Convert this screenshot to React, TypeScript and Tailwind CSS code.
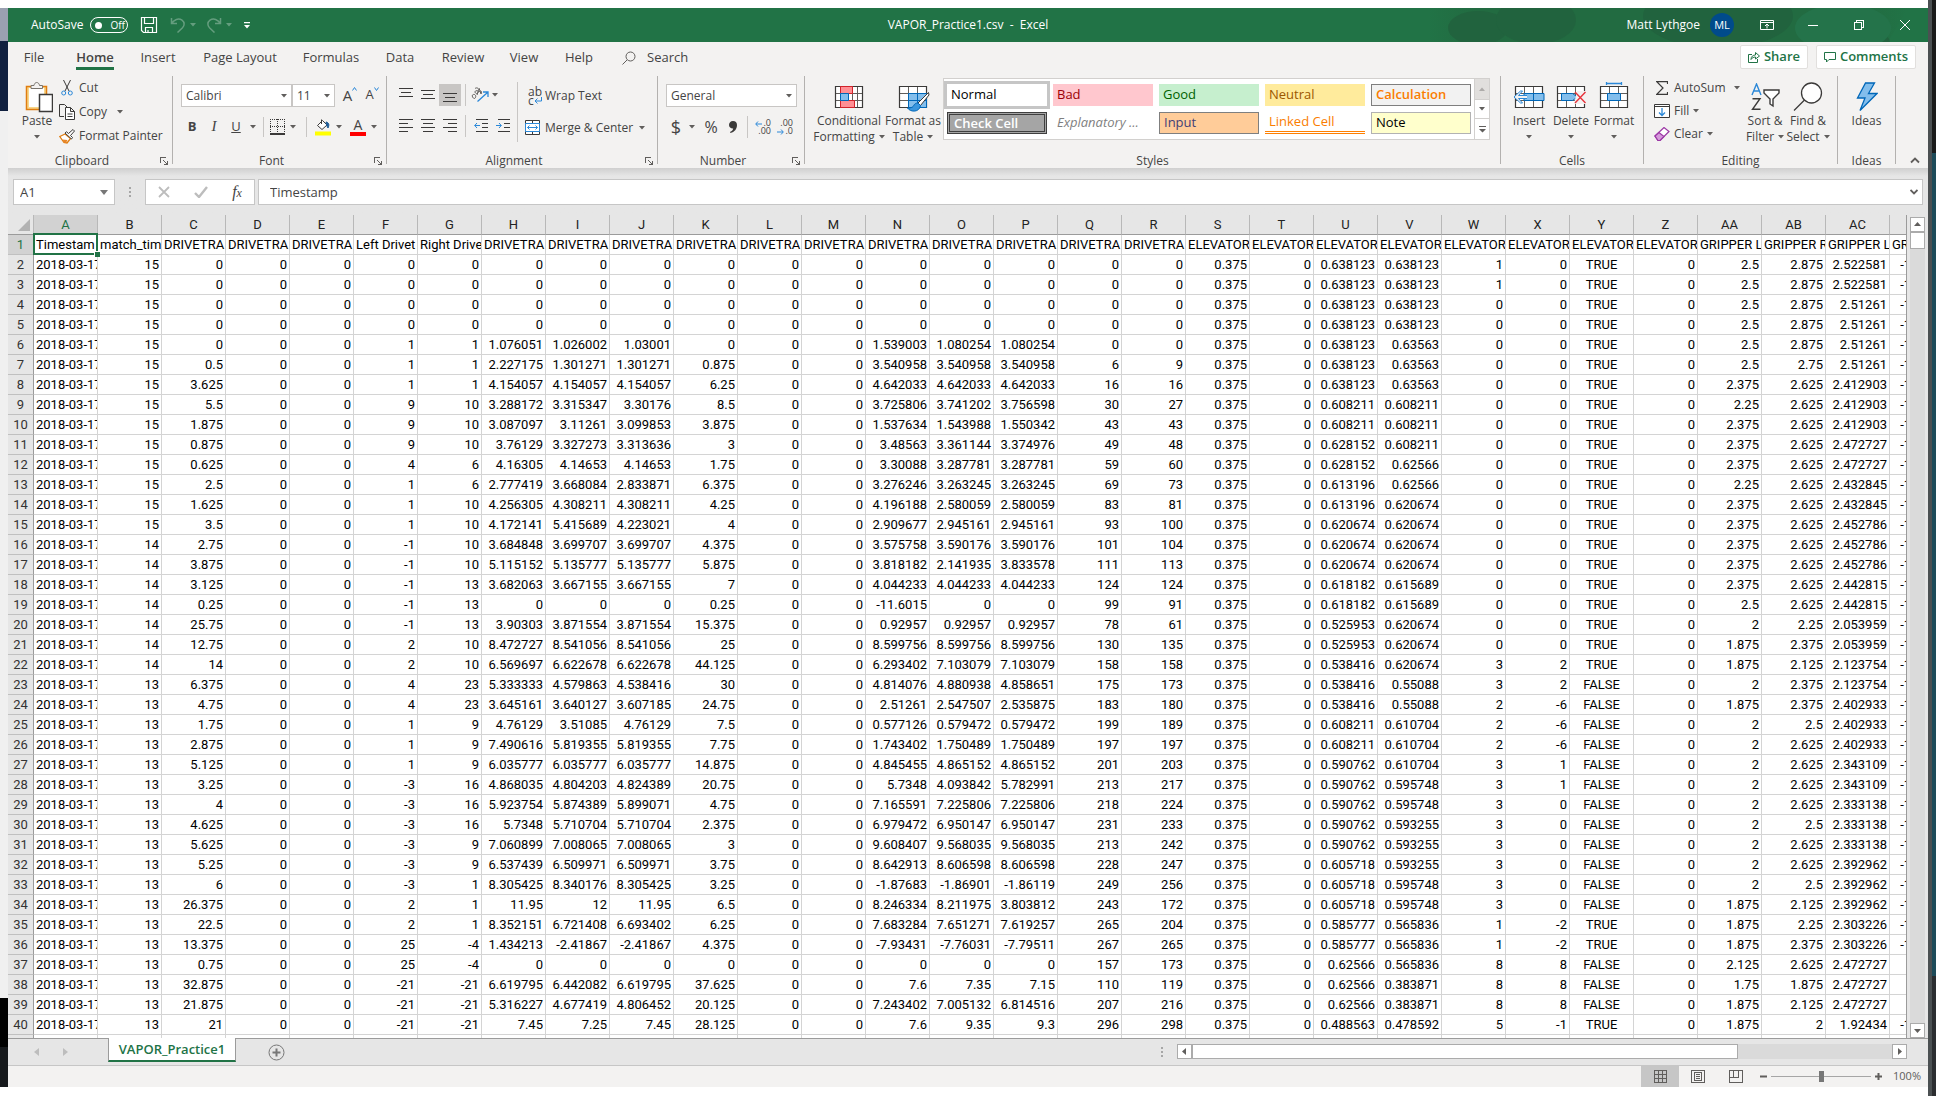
import type { ReactNode } from 'react';

const COLUMNS = 'A B C D E F G H I J K L M N O P Q R S T U V W X Y Z AA AB AC AD'.split(' ');

const HEADERS = [
  'Timestam', 'match_tim', 'DRIVETRA', 'DRIVETRA', 'DRIVETRA', 'Left Drivet', 'Right Drive',
  'DRIVETRA', 'DRIVETRA', 'DRIVETRA', 'DRIVETRA', 'DRIVETRA', 'DRIVETRA', 'DRIVETRA', 'DRIVETRA',
  'DRIVETRA', 'DRIVETRA', 'DRIVETRA', 'ELEVATOR', 'ELEVATOR', 'ELEVATOR', 'ELEVATOR', 'ELEVATOR',
  'ELEVATOR', 'ELEVATOR', 'ELEVATOR', 'GRIPPER L', 'GRIPPER R', 'GRIPPER L', 'GRIPPER R',
];

const CSV = `15,0,0,0,0,0,0,0,0,0,0,0,0,0,0,0,0,0.375,0,0.638123,0.638123,1,0,TRUE,0,2.5,2.875,2.522581,-1.52258
15,0,0,0,0,0,0,0,0,0,0,0,0,0,0,0,0,0.375,0,0.638123,0.638123,1,0,TRUE,0,2.5,2.875,2.522581,-1.52258
15,0,0,0,0,0,0,0,0,0,0,0,0,0,0,0,0,0.375,0,0.638123,0.638123,0,0,TRUE,0,2.5,2.875,2.51261,-1.52258
15,0,0,0,0,0,0,0,0,0,0,0,0,0,0,0,0,0.375,0,0.638123,0.638123,0,0,TRUE,0,2.5,2.875,2.51261,-1.52258
15,0,0,0,1,1,1.076051,1.026002,1.03001,0,0,0,1.539003,1.080254,1.080254,0,0,0.375,0,0.638123,0.63563,0,0,TRUE,0,2.5,2.875,2.51261,-1.52258
15,0.5,0,0,1,1,2.227175,1.301271,1.301271,0.875,0,0,3.540958,3.540958,3.540958,6,9,0.375,0,0.638123,0.63563,0,0,TRUE,0,2.5,2.75,2.51261,-1.52258
15,3.625,0,0,1,1,4.154057,4.154057,4.154057,6.25,0,0,4.642033,4.642033,4.642033,16,16,0.375,0,0.638123,0.63563,0,0,TRUE,0,2.375,2.625,2.412903,-1.52258
15,5.5,0,0,9,10,3.288172,3.315347,3.30176,8.5,0,0,3.725806,3.741202,3.756598,30,27,0.375,0,0.608211,0.608211,0,0,TRUE,0,2.25,2.625,2.412903,-1.52258
15,1.875,0,0,9,10,3.087097,3.11261,3.099853,3.875,0,0,1.537634,1.543988,1.550342,43,43,0.375,0,0.608211,0.608211,0,0,TRUE,0,2.375,2.625,2.412903,-1.52258
15,0.875,0,0,9,10,3.76129,3.327273,3.313636,3,0,0,3.48563,3.361144,3.374976,49,48,0.375,0,0.628152,0.608211,0,0,TRUE,0,2.375,2.625,2.472727,-1.52258
15,0.625,0,0,4,6,4.16305,4.14653,4.14653,1.75,0,0,3.30088,3.287781,3.287781,59,60,0.375,0,0.628152,0.62566,0,0,TRUE,0,2.375,2.625,2.472727,-1.52258
15,2.5,0,0,1,6,2.777419,3.668084,2.833871,6.375,0,0,3.276246,3.263245,3.263245,69,73,0.375,0,0.613196,0.62566,0,0,TRUE,0,2.25,2.625,2.432845,-1.52258
15,1.625,0,0,1,10,4.256305,4.308211,4.308211,4.25,0,0,4.196188,2.580059,2.580059,83,81,0.375,0,0.613196,0.620674,0,0,TRUE,0,2.375,2.625,2.432845,-1.52258
15,3.5,0,0,1,10,4.172141,5.415689,4.223021,4,0,0,2.909677,2.945161,2.945161,93,100,0.375,0,0.620674,0.620674,0,0,TRUE,0,2.375,2.625,2.452786,-1.52258
14,2.75,0,0,-1,10,3.684848,3.699707,3.699707,4.375,0,0,3.575758,3.590176,3.590176,101,104,0.375,0,0.620674,0.620674,0,0,TRUE,0,2.375,2.625,2.452786,-1.52258
14,3.875,0,0,-1,10,5.115152,5.135777,5.135777,5.875,0,0,3.818182,2.141935,3.833578,111,113,0.375,0,0.620674,0.620674,0,0,TRUE,0,2.375,2.625,2.452786,-1.52258
14,3.125,0,0,-1,13,3.682063,3.667155,3.667155,7,0,0,4.044233,4.044233,4.044233,124,124,0.375,0,0.618182,0.615689,0,0,TRUE,0,2.375,2.625,2.442815,-1.52258
14,0.25,0,0,-1,13,0,0,0,0.25,0,0,-11.6015,0,0,99,91,0.375,0,0.618182,0.615689,0,0,TRUE,0,2.5,2.625,2.442815,-1.52258
14,25.75,0,0,-1,13,3.90303,3.871554,3.871554,15.375,0,0,0.92957,0.92957,0.92957,78,61,0.375,0,0.525953,0.620674,0,0,TRUE,0,2,2.25,2.053959,-1.52258
14,12.75,0,0,2,10,8.472727,8.541056,8.541056,25,0,0,8.599756,8.599756,8.599756,130,135,0.375,0,0.525953,0.620674,0,0,TRUE,0,1.875,2.375,2.053959,-1.52258
14,14,0,0,2,10,6.569697,6.622678,6.622678,44.125,0,0,6.293402,7.103079,7.103079,158,158,0.375,0,0.538416,0.620674,3,2,TRUE,0,1.875,2.125,2.123754,-1.52258
13,6.375,0,0,4,23,5.333333,4.579863,4.538416,30,0,0,4.814076,4.880938,4.858651,175,173,0.375,0,0.538416,0.55088,3,2,FALSE,0,2,2.375,2.123754,-1.52258
13,4.75,0,0,4,23,3.645161,3.640127,3.607185,24.75,0,0,2.51261,2.547507,2.535875,183,180,0.375,0,0.538416,0.55088,2,-6,FALSE,0,1.875,2.375,2.402933,-1.52258
13,1.75,0,0,1,9,4.76129,3.51085,4.76129,7.5,0,0,0.577126,0.579472,0.579472,199,189,0.375,0,0.608211,0.610704,2,-6,FALSE,0,2,2.5,2.402933,-1.52258
13,2.875,0,0,1,9,7.490616,5.819355,5.819355,7.75,0,0,1.743402,1.750489,1.750489,197,197,0.375,0,0.608211,0.610704,2,-6,FALSE,0,2,2.625,2.402933,-1.52258
13,5.125,0,0,1,9,6.035777,6.035777,6.035777,14.875,0,0,4.845455,4.865152,4.865152,201,203,0.375,0,0.590762,0.610704,3,1,FALSE,0,2,2.625,2.343109,-1.52258
13,3.25,0,0,-3,16,4.868035,4.804203,4.824389,20.75,0,0,5.7348,4.093842,5.782991,213,217,0.375,0,0.590762,0.595748,3,1,FALSE,0,2,2.625,2.343109,-1.52258
13,4,0,0,-3,16,5.923754,5.874389,5.899071,4.75,0,0,7.165591,7.225806,7.225806,218,224,0.375,0,0.590762,0.595748,3,0,FALSE,0,2,2.625,2.333138,-1.52258
13,4.625,0,0,-3,16,5.7348,5.710704,5.710704,2.375,0,0,6.979472,6.950147,6.950147,231,233,0.375,0,0.590762,0.593255,3,0,FALSE,0,2,2.5,2.333138,-1.52258
13,5.625,0,0,-3,9,7.060899,7.008065,7.008065,3,0,0,9.608407,9.568035,9.568035,213,242,0.375,0,0.590762,0.593255,3,0,FALSE,0,2,2.625,2.333138,-1.52258
13,5.25,0,0,-3,9,6.537439,6.509971,6.509971,3.75,0,0,8.642913,8.606598,8.606598,228,247,0.375,0,0.605718,0.593255,3,0,FALSE,0,2,2.625,2.392962,-1.52258
13,6,0,0,-3,1,8.305425,8.340176,8.305425,3.25,0,0,-1.87683,-1.86901,-1.86119,249,256,0.375,0,0.605718,0.595748,3,0,FALSE,0,2,2.5,2.392962,-1.52258
13,26.375,0,0,2,1,11.95,12,11.95,6.5,0,0,8.246334,8.211975,3.803812,243,172,0.375,0,0.605718,0.595748,3,0,FALSE,0,1.875,2.125,2.392962,-1.52258
13,22.5,0,0,2,1,8.352151,6.721408,6.693402,6.25,0,0,7.683284,7.651271,7.619257,265,204,0.375,0,0.585777,0.565836,1,-2,TRUE,0,1.875,2.25,2.303226,-1.52258
13,13.375,0,0,25,-4,1.434213,-2.41867,-2.41867,4.375,0,0,-7.93431,-7.76031,-7.79511,267,265,0.375,0,0.585777,0.565836,1,-2,TRUE,0,1.875,2.375,2.303226,-1.52258
13,0.75,0,0,25,-4,0,0,0,0,0,0,0,0,0,157,173,0.375,0,0.62566,0.565836,8,8,FALSE,0,2.125,2.625,2.472727,0
13,32.875,0,0,-21,-21,6.619795,6.442082,6.619795,37.625,0,0,7.6,7.35,7.15,110,119,0.375,0,0.62566,0.383871,8,8,FALSE,0,1.75,1.875,2.472727,0
13,21.875,0,0,-21,-21,5.316227,4.677419,4.806452,20.125,0,0,7.243402,7.005132,6.814516,207,216,0.375,0,0.62566,0.383871,8,8,FALSE,0,1.875,2.125,2.472727,0
13,21,0,0,-21,-21,7.45,7.25,7.45,28.125,0,0,7.6,9.35,9.3,296,298,0.375,0,0.488563,0.478592,5,-1,TRUE,0,1.875,2,1.92434,-1.52258`;

const ROWS = CSV.split('\n').map((line) => ['2018-03-17', ...line.split(',')]);

function Caret({ className = '' }: { className?: string }) {
  return (
    <svg viewBox="0 0 6 4" width="6" height="4" className={`shrink-0 fill-[#605e5c] ${className}`}>
      <path d="M0 0h6L3 3.5z" />
    </svg>
  );
}

function Lines({ rows }: { rows: Array<[number, number, number]> }) {
  return (
    <svg viewBox="0 0 14 14" width="14" height="14" stroke="#3b3a39" shapeRendering="crispEdges">
      {rows.map(([y, x1, x2]) => (
        <path key={y} d={`M${x1} ${y}.5H${x2}`} />
      ))}
    </svg>
  );
}

function IconButton({ label, children, active, className = 'w-[22px]' }: { label: string; children: ReactNode; active?: boolean; className?: string }) {
  return (
    <button type="button" aria-label={label} className={`flex h-[22px] shrink-0 items-center justify-center ${active ? 'bg-[#c8c6c4]' : ''} ${className}`}>
      {children}
    </button>
  );
}

function DropButton({ label }: { label: string }) {
  return (
    <button type="button" aria-label={label} className="flex h-[22px] w-[11px] shrink-0 items-center justify-center">
      <Caret />
    </button>
  );
}

function Divider({ className = 'h-[22px]' }: { className?: string }) {
  return <span className={`w-px shrink-0 bg-[#c8c6c4] ${className}`} />;
}

function Group({ label, width, launcher, children }: { label: string; width: string; launcher?: boolean; children: ReactNode }) {
  return (
    <>
      <section aria-label={label} className={`flex h-[92px] flex-col ${width}`}>
        <div className="flex h-[77px] w-full">{children}</div>
        <div className="flex h-[15px] items-center">
          <span className="flex-1 text-center leading-[15px]">{label}</span>
          {launcher && (
            <button type="button" aria-label={`${label} settings`} className="flex h-4 w-4 items-center justify-center">
              <svg viewBox="0 0 8 8" width="8" height="8" fill="none" stroke="#605e5c" shapeRendering="crispEdges">
                <path d="M.5 6V.5H6M3 3l4 4M7.5 4v3.500H4" />
              </svg>
            </button>
          )}
        </div>
      </section>
      <span className="h-[88px] w-px shrink-0 bg-[#b3b1af]" />
    </>
  );
}

function BigButton({ icon, lines, caret, width }: { icon: ReactNode; lines: string[]; caret?: boolean; width: string }) {
  return (
    <button type="button" className={`flex shrink-0 flex-col items-center ${width}`}>
      <span className="flex h-[37px] items-center pt-1">{icon}</span>
      {lines.map((line, i) => (
        <span key={line} className="flex h-4 items-center gap-1 leading-4 whitespace-nowrap">
          {line}
          {caret && lines.length > 1 && i === lines.length - 1 && <Caret />}
        </span>
      ))}
      {caret && lines.length === 1 && <Caret className="mt-1.5" />}
    </button>
  );
}

function SmallButton({ icon, label, caret, height = 'h-6', gap = 'gap-1.5' }: { icon: ReactNode; label: string; caret?: boolean; height?: string; gap?: string }) {
  return (
    <button type="button" className={`flex items-center ${height} ${gap}`}>
      <span className="flex items-center gap-1">
        <span className="flex w-4 justify-center">{icon}</span>
        <span className="whitespace-nowrap">{label}</span>
      </span>
      {caret && <Caret />}
    </button>
  );
}

function Select({ label, value, width }: { label: string; value: string; width: string }) {
  return (
    <label className={`relative flex h-[23px] shrink-0 items-center border border-[#c8c6c4] bg-white ${width}`}>
      <select aria-label={label} defaultValue={value} className="h-full w-full appearance-none bg-transparent pl-1 outline-none">
        <option>{value}</option>
      </select>
      <Caret className="pointer-events-none absolute right-1" />
    </label>
  );
}

function TitleBar() {
  return (
    <header className="relative flex h-[34px] shrink-0 items-center overflow-hidden bg-[#217346] text-white">
      <svg viewBox="0 0 500 34" width="500" height="34" className="absolute top-0 right-0">
        <defs>
          <linearGradient id="band" x1="0" x2="1">
            <stop offset="0" stopColor="#217346" />
            <stop offset="0.1" stopColor="#226b41" />
            <stop offset="0.9" stopColor="#226b41" />
            <stop offset="1" stopColor="#217346" />
          </linearGradient>
        </defs>
        <path d="M0 0h480l-20 34H0z" fill="url(#band)" />
        <g fill="#21633e">
          <ellipse cx="50" cy="20" rx="30" ry="17" />
          <ellipse cx="108" cy="12" rx="40" ry="24" />
          <ellipse cx="290" cy="8" rx="75" ry="32" />
          <circle cx="450" cy="36" r="12" />
        </g>
        <ellipse cx="415" cy="20" rx="48" ry="24" fill="#24734a" />
      </svg>
      <div className="relative flex h-full flex-1 items-center text-xs">
        <label className="ml-[23px] flex items-center gap-[7px]">
          AutoSave
          <span className="relative flex h-4 w-[38px] items-center rounded-full border border-white">
            <input type="checkbox" className="peer absolute inset-0 appearance-none" />
            <span className="ml-1 h-[7px] w-[7px] rounded-full bg-white" />
            <span className="ml-2 text-[10px] leading-3">Off</span>
          </span>
        </label>
        <button type="button" aria-label="Save" className="ml-3">
          <svg viewBox="0 0 18 18" width="18" height="18" fill="none" stroke="white" strokeWidth="1.200">
            <path d="M1.500 1.500h15v15h-13l-2-2zM4.500 1.500v6h9v-6M5.500 16.500v-5h7v5M8 16.500v-2.500" />
          </svg>
        </button>
        <button type="button" aria-label="Undo" className="ml-3 flex items-center gap-1 opacity-30">
          <svg viewBox="0 0 16 16" width="16" height="16" fill="none" stroke="white" strokeWidth="1.500">
            <path d="M1.500 1v5.500H7M1.500 6.500C4 2.500 8.500.8 12 3.200c3 2.300 2.500 5.600.5 7.600L7.500 15.500" />
          </svg>
          <svg viewBox="0 0 6 4" width="6" height="4" fill="white"><path d="M0 0h6L3 3.500z" /></svg>
        </button>
        <button type="button" aria-label="Redo" className="ml-[10px] flex items-center gap-1 opacity-30">
          <svg viewBox="0 0 16 16" width="16" height="16" fill="none" stroke="white" strokeWidth="1.500">
            <path d="M14.500 1v5.500H9M14.500 6.500C12 2.500 7.500.8 4 3.200 1 5.500 1.500 8.800 3.500 10.800L8.500 15.500" />
          </svg>
          <svg viewBox="0 0 6 4" width="6" height="4" fill="white"><path d="M0 0h6L3 3.500z" /></svg>
        </button>
        <button type="button" aria-label="Customize Quick Access Toolbar" className="ml-3">
          <svg viewBox="0 0 6 7" width="6" height="7" fill="white"><path d="M0 0h6v1.200H0zM0 3h6L3 6.500z" /></svg>
        </button>
      </div>
      <h1 className="relative text-xs whitespace-pre">VAPOR_Practice1.csv  -  Excel</h1>
      <div className="relative flex h-full flex-1 items-center justify-end text-xs">
        <button type="button" className="mr-[10px] flex items-center gap-[10px]">
          Matt Lythgoe
          <span className="flex h-6 w-6 items-center justify-center rounded-full bg-[#004b8b] text-[11px]">ML</span>
        </button>
        <button type="button" aria-label="Ribbon Display Options" className="flex w-[46px] justify-center">
          <svg viewBox="0 0 14 12" width="14" height="12" fill="none" stroke="white">
            <path d="M.5 1.500h13v9H.5zM.5 3.500h13M7 9.500v-4M5 7l2-2 2 2" />
          </svg>
        </button>
        <button type="button" aria-label="Minimize" className="flex w-[46px] justify-center">
          <svg viewBox="0 0 10 10" width="10" height="10" stroke="white" shapeRendering="crispEdges"><path d="M0 5.500h10" /></svg>
        </button>
        <button type="button" aria-label="Restore" className="flex w-[46px] justify-center">
          <svg viewBox="0 0 10 10" width="10" height="10" fill="none" stroke="white" shapeRendering="crispEdges">
            <path d="M.5 2.500h7v7h-7zM2.500 2V.5h7v7H8" />
          </svg>
        </button>
        <button type="button" aria-label="Close" className="flex w-[46px] justify-center">
          <svg viewBox="0 0 10 10" width="10" height="10" stroke="white"><path d="M0 0l10 10M10 0L0 10" /></svg>
        </button>
      </div>
    </header>
  );
}

const TABS: Array<[string, string]> = [
  ['File', 'w-[52px]'],
  ['Home', 'w-[70px]'],
  ['Insert', 'w-[56px]'],
  ['Page Layout', 'w-[108px]'],
  ['Formulas', 'w-[74px]'],
  ['Data', 'w-[64px]'],
  ['Review', 'w-[62px]'],
  ['View', 'w-[60px]'],
  ['Help', 'w-[50px]'],
];

function TabRow() {
  return (
    <nav className="flex h-[34px] shrink-0 items-center bg-[#f3f2f1] text-[13px]">
      {TABS.map(([tab, width]) => (
        <button key={tab} type="button" className={`flex h-full justify-center pt-[5px] ${width}`}>
          <span className={tab === 'Home' ? 'h-[23px] border-b-[3px] border-[#217346] font-semibold leading-5' : 'leading-5'}>{tab}</span>
        </button>
      ))}
      <label className="ml-[18px] flex items-center gap-[11px] pb-0.5">
        <svg viewBox="0 0 14 14" width="14" height="14" fill="none" stroke="#605e5c">
          <circle cx="8.500" cy="5.500" r="4.500" /><path d="M5 9L.5 13.500" />
        </svg>
        <input aria-label="Search" placeholder="Search" className="w-24 bg-transparent outline-none placeholder:text-[#444]" />
      </label>
      <div className="ml-auto flex gap-2 pr-3 pb-1 font-semibold text-[#217346]">
        <button type="button" className="flex h-6 w-[68px] items-center justify-center gap-1 rounded-xs border border-[#e1dfdd] bg-white">
          <svg viewBox="0 0 12 12" width="12" height="12" fill="none" stroke="#217346">
            <path d="M4 3.500H.5v8h9V8M3 8.500C3 5.500 5 4 7.500 4V1.500L11.500 5 7.500 8V6C5.500 6 4 6.800 3 8.500z" />
          </svg>
          Share
        </button>
        <button type="button" className="flex h-6 w-[100px] items-center justify-center gap-1 rounded-xs border border-[#e1dfdd] bg-white">
          <svg viewBox="0 0 12 12" width="12" height="12" fill="none" stroke="#217346"><path d="M.5 1.500h11v7H5L2.500 11V8.500h-2z" /></svg>
          Comments
        </button>
      </div>
    </nav>
  );
}

function GridIcon({ children, clip = 'M.5 .5h27v21H.5zM9.500 .5v21M18.500 .5v21M.5 7.500h27M.5 14.500h27' }: { children: ReactNode; clip?: string }) {
  return (
    <svg viewBox="0 0 34 30" width="34" height="30" fill="none">
      <g transform="translate(3 4)">
        <path d="M.5 .5h27v21H.5z" fill="#fff" />
        <path d={clip} stroke="#605e5c" />
        <path d="M.5 .5h27v21H.5z" stroke="#3b3a39" strokeWidth="1.200" />
        {children}
      </g>
    </svg>
  );
}

function StyleCell({ children, className }: { children: ReactNode; className: string }) {
  return (
    <button type="button" className={`h-[22px] w-[100px] overflow-hidden px-1 pb-0.5 text-left font-['Open_Sans',sans-serif] text-[13px] leading-4 whitespace-nowrap ${className}`}>
      {children}
    </button>
  );
}

function Ribbon() {
  return (
    <div className="flex h-[92px] shrink-0 bg-[#f3f2f1] text-xs">
      <Group label="Clipboard" width="w-[164px]" launcher>
        <BigButton
          width="ml-[7px] w-11"
          lines={['Paste']}
          caret
          icon={
            <svg viewBox="0 0 28 32" width="28" height="32" fill="none" className="ml-1">
              <path d="M1.500 5.500h20v23h-20z" fill="#f8d78a" stroke="#e07d10" strokeWidth="1.500" />
              <path d="M4 7h15v19H4z" fill="#fff" />
              <path d="M6 7.500V4.500h3c.5-4 5-4 5.500 0h3v3z" fill="#f3f2f1" stroke="#79756f" />
              <path d="M14.500 13.500h13v17h-13z" fill="#fff" stroke="#3b3a39" strokeWidth="1.500" />
            </svg>
          }
        />
        <div className="flex flex-col">
          <SmallButton
            label="Cut"
            icon={
              <svg viewBox="0 0 12 16" width="12" height="16" fill="none">
                <path d="M2.500 0l5.500 11M9.500 0L4 11" stroke="#3b3a39" />
                <circle cx="2.700" cy="13" r="2" stroke="#2b88d8" /><circle cx="9.300" cy="13" r="2" stroke="#2b88d8" />
              </svg>
            }
          />
          <SmallButton
            label="Copy"
            caret
            gap="gap-2.5"
            icon={
              <svg viewBox="0 0 16 16" width="16" height="16" fill="none" stroke="#3b3a39">
                <path d="M5 12.500H.5V.5h5L8 3" /><path d="M6.500 3.500h5l4 4v8h-9zM11.500 3.500v4h4M8.500 10h5M8.500 12.500h5" fill="#fff" />
              </svg>
            }
          />
          <SmallButton
            label="Format Painter"
            icon={
              <svg viewBox="0 0 16 15" width="16" height="15" fill="none">
                <path d="M6 5L.8 7.500 5 13.500l3 .5 3.500-4.500z" fill="#fff" stroke="#e07d10" strokeWidth="1.300" />
                <path d="M3.500 10.500l5 .5-1.500 3-2-.5z" fill="#e8862a" />
                <path d="M6 4l6.500 6 1-1.500-2-2L15.500 2 14 .5 9.500 4.500l-2-1.700z" fill="#fff" stroke="#3b3a39" />
              </svg>
            }
          />
        </div>
      </Group>

      <Group label="Font" width="w-[213px]" launcher>
        <div className="flex flex-col gap-[9px] pt-2 pl-2">
          <div className="flex">
            <Select label="Font" value="Calibri" width="w-[111px]" />
            <Select label="Font size" value="11" width="w-[43px]" />
            <IconButton label="Increase font size" className="ml-1 w-[22px]">
              <span className="text-[15px]">A</span>
              <svg viewBox="0 0 5 4" width="5" height="4" className="mb-3" fill="none" stroke="#2b88d8"><path d="M.5 3.500l2-3 2 3" /></svg>
            </IconButton>
            <IconButton label="Decrease font size">
              <span className="text-[13px]">A</span>
              <svg viewBox="0 0 5 4" width="5" height="4" className="mb-3" fill="none" stroke="#2b88d8"><path d="M.5 .5l2 3 2-3" /></svg>
            </IconButton>
          </div>
          <div className="flex items-center">
            <IconButton label="Bold"><b className="text-[13px]">B</b></IconButton>
            <IconButton label="Italic"><i className="font-['Liberation_Serif',serif] text-[15px]">I</i></IconButton>
            <IconButton label="Underline"><u className="text-[13px]">U</u></IconButton>
            <DropButton label="Underline options" />
            <Divider className="mx-[5px] h-5" />
            <IconButton label="Borders" className="w-[18px]">
              <svg viewBox="0 0 16 16" width="16" height="16" stroke="#3b3a39" shapeRendering="crispEdges">
                <path d="M0 .5h15M0 7.500h15M.5 0v14M7.500 0v14M14.500 0v14" strokeDasharray="1 1" />
                <path d="M0 14.500h15" strokeWidth="2" />
              </svg>
            </IconButton>
            <DropButton label="Border options" />
            <Divider className="mr-1 ml-2 h-5" />
            <IconButton label="Fill color" className="ml-0.5 w-5">
              <svg viewBox="0 0 16 18" width="16" height="18" fill="none">
                <path d="M2.500 7.500l5-5 4.500 4.500-5 4.500z" fill="#fff" stroke="#3b3a39" /><path d="M6.500 6V1.500" stroke="#3b3a39" />
                <path d="M11 4c3 .5 3.500 3 2 6-1-1.500-1.500-3-2-6z" fill="#1e5c97" stroke="#1e5c97" />
                <path d="M0 13.500h16v4H0z" fill="#ff0" />
              </svg>
            </IconButton>
            <DropButton label="Fill color options" />
            <IconButton label="Font color" className="ml-1 w-5">
              <span className="flex flex-col items-center">
                <span className="text-sm leading-[14px]">A</span>
                <span className="h-1 w-4 bg-[#f00]" />
              </span>
            </IconButton>
            <DropButton label="Font color options" />
          </div>
        </div>
      </Group>

      <Group label="Alignment" width="w-[270px]" launcher>
        <div className="flex w-[130px] flex-col gap-[9px] pt-2 pl-2">
          <div className="flex">
            <IconButton label="Top align"><Lines rows={[[0, 0, 14], [4, 2, 12], [8, 0, 14]]} /></IconButton>
            <IconButton label="Middle align"><Lines rows={[[2, 0, 14], [6, 2, 12], [10, 0, 14]]} /></IconButton>
            <IconButton label="Bottom align" active><Lines rows={[[5, 0, 14], [9, 2, 12], [13, 0, 14]]} /></IconButton>
            <Divider className="mr-[5px] ml-1 h-[22px]" />
            <IconButton label="Orientation" className="w-[18px]">
              <svg viewBox="0 0 18 16" width="18" height="16" fill="none">
                <path d="M4 1.500c2-1.500 4 0 3.500 2L6 8M7 4C5 3 3 4.500 4.500 6s3-.500 3-2M1.500 8c1.500-1.500 4 0 3 2.500s-4-.500-3-2.500M8 1l2 6c1.500-3-.500-4-2-2" stroke="#605e5c" />
                <path d="M6.500 14.500l10-9M12 5h5v5" stroke="#2b88d8" strokeWidth="1.300" />
              </svg>
            </IconButton>
            <DropButton label="Orientation options" />
          </div>
          <div className="flex">
            <IconButton label="Align left"><Lines rows={[[0, 0, 14], [4, 0, 9], [8, 0, 14], [12, 0, 9]]} /></IconButton>
            <IconButton label="Center"><Lines rows={[[0, 0, 14], [4, 2, 12], [8, 0, 14], [12, 2, 12]]} /></IconButton>
            <IconButton label="Align right"><Lines rows={[[0, 0, 14], [4, 5, 14], [8, 0, 14], [12, 5, 14]]} /></IconButton>
            <Divider className="mr-1 ml-1 h-[22px]" />
            <IconButton label="Decrease indent">
              <svg viewBox="0 0 14 14" width="14" height="14" fill="none">
                <path d="M2 .5h12M8 4.500h6M8 8.500h6M2 12.500h12" stroke="#3b3a39" /><path d="M6 6.500H.7M3 4L.7 6.500 3 9" stroke="#2b88d8" />
              </svg>
            </IconButton>
            <IconButton label="Increase indent">
              <svg viewBox="0 0 14 14" width="14" height="14" fill="none">
                <path d="M2 .5h12M8 4.500h6M8 8.500h6M2 12.500h12" stroke="#3b3a39" /><path d="M0 6.500h5.300M3 4l2.300 2.500L3 9" stroke="#2b88d8" />
              </svg>
            </IconButton>
          </div>
        </div>
        <Divider className="mt-1.5 h-[60px]" />
        <div className="flex flex-col gap-[9px] pt-2 pl-[7px]">
          <SmallButton
            height="h-[23px]"
            label="Wrap Text"
            icon={
              <span className="relative ml-1 block h-[18px] w-4 text-left text-[12px] leading-[9px]">
                ab
                <span className="block">c</span>
                <svg viewBox="0 0 8 8" width="8" height="8" className="absolute right-0 bottom-0" fill="none" stroke="#2b88d8">
                  <path d="M7.500 0v4H1M3.500 1.500L1 4l2.500 2.500" />
                </svg>
              </span>
            }
          />
          <SmallButton
            height="h-[23px]"
            label="Merge & Center"
            caret
            icon={
              <svg viewBox="0 0 16 16" width="16" height="16" fill="none">
                <path d="M.5 .5h14v14H.5z" fill="#fff" stroke="#3b3a39" /><path d="M7.500 0v15" stroke="#3b3a39" />
                <path d="M.5 3.500h14v8H.5z" fill="#fff" stroke="#2b88d8" />
                <path d="M2.500 7.500h10M4.500 5.500l-2 2 2 2M10.500 5.500l2 2-2 2" stroke="#2b88d8" />
              </svg>
            }
          />
        </div>
      </Group>

      <Group label="Number" width="w-[146px]" launcher>
        <div className="flex flex-col gap-[9px] pt-2 pl-2">
          <Select label="Number format" value="General" width="w-[131px]" />
          <div className="flex items-center">
            <IconButton label="Accounting number format" className="w-5"><span className="text-lg">$</span></IconButton>
            <DropButton label="Accounting options" />
            <IconButton label="Percent style" className="ml-1 w-5"><span className="text-base">%</span></IconButton>
            <IconButton label="Comma style" className="w-6">
              <svg viewBox="0 0 8 12" width="8" height="12" fill="#3b3a39"><path d="M4 0c2.500 0 4 1.500 4 4 0 4-2.500 7-6.500 8l-.5-1c2-.8 3-2 3.200-3.500C2 7.700 0 6.200 0 4s1.500-4 4-4z" /></svg>
            </IconButton>
            <Divider className="mr-1 ml-0.5 h-[22px]" />
            <IconButton label="Increase decimal">
              <span className="relative block w-4 text-right text-[9px] leading-2">
                .0<span className="block">.00</span>
                <svg viewBox="0 0 7 6" width="7" height="6" className="absolute top-0.5 left-0" fill="none" stroke="#2b88d8"><path d="M7 3H1M3 .5L.7 3 3 5.500" /></svg>
              </span>
            </IconButton>
            <IconButton label="Decrease decimal">
              <span className="relative block w-4 text-right text-[9px] leading-2">
                .00<span className="block">.0</span>
                <svg viewBox="0 0 7 6" width="7" height="6" className="absolute bottom-0 left-0" fill="none" stroke="#2b88d8"><path d="M0 3h6M4 .5L6.300 3 4 5.500" /></svg>
              </span>
            </IconButton>
          </div>
        </div>
      </Group>

      <Group label="Styles" width="min-w-[620px] flex-1">
        <BigButton
          width="ml-[9px] w-[70px]"
          caret
          lines={['Conditional', 'Formatting']}
          icon={
            <GridIcon clip="M.5 7.500h27M.5 14.500h27M5.500 .5v21M17.500 .5v21M22.500 .5v21">
              <path d="M5.500 .5h12v7h-12zM5.500 14.500h14v7h-14z" fill="#ff8f94" stroke="#d2222a" /><path d="M5.500 7.500h8v7h-8z" fill="#83beec" stroke="#0067b8" />
            </GridIcon>
          }
        />
        <BigButton
          width="w-[58px]"
          caret
          lines={['Format as', 'Table']}
          icon={
            <GridIcon>
              <path d="M9.500 7.500h18v14h-18z" fill="#83beec" stroke="#0067b8" /><path d="M18.500 7.500v14M9.500 14.500h18" stroke="#0067b8" />
              <path d="M29.500 6.500L19 17l2.500 2.500L30 9z" fill="#fff" stroke="#3b3a39" /><path d="M19 17c-4 0-4 3-5.500 4-2 1-3 1-5 1 3 4.500 12 4.500 13-2.500z" fill="#3a96dd" stroke="#0067b8" />
            </GridIcon>
          }
        />
        <div className="mt-0.5 ml-px flex h-[62px]">
          <div className="grid grid-cols-[repeat(5,100px)] content-start gap-1.5 border border-[#d2d0ce] bg-white py-[5px] pr-[3px] pl-[3px]">
            <StyleCell className="bg-white text-black outline-3 outline-[#c6c6c6]">Normal</StyleCell>
            <StyleCell className="bg-[#ffc7ce] text-[#9c0006]">Bad</StyleCell>
            <StyleCell className="bg-[#c6efce] text-[#006100]">Good</StyleCell>
            <StyleCell className="bg-[#ffeb9c] text-[#9c5700]">Neutral</StyleCell>
            <StyleCell className="border border-[#7f7f7f] bg-[#f2f2f2] font-semibold text-[#fa7d00]">Calculation</StyleCell>
            <StyleCell className="border-[3px] border-double border-[#3f3f3f] bg-[#a5a5a5] font-semibold text-white">Check Cell</StyleCell>
            <StyleCell className="bg-white text-[#7f7f7f] italic">Explanatory ...</StyleCell>
            <StyleCell className="border border-[#7f7f7f] bg-[#ffcc99] text-[#3f3f76]">Input</StyleCell>
            <StyleCell className="border-b-[3px] border-double border-[#ff8001] bg-white text-[#fa7d00]">Linked Cell</StyleCell>
            <StyleCell className="border border-[#b2b2b2] bg-[#ffffcc] text-black">Note</StyleCell>
          </div>
          <div className="flex w-[15px] flex-col border border-l-0 border-[#d2d0ce] bg-white">
            <button type="button" aria-label="Previous styles" className="flex h-5 items-center justify-center bg-[#e1dfdd]"><Caret className="rotate-180 opacity-40" /></button>
            <button type="button" aria-label="Next styles" className="flex h-5 items-center justify-center border-y border-[#d2d0ce]"><Caret /></button>
            <button type="button" aria-label="More styles" className="flex flex-1 items-center justify-center">
              <svg viewBox="0 0 7 8" width="7" height="8" fill="#605e5c"><path d="M0 1h7v1H0zM0 4h7L3.500 7.500z" /></svg>
            </button>
          </div>
        </div>
      </Group>

      <Group label="Cells" width="w-[142px]">
        <BigButton
          width="ml-[7px] w-[42px]"
          caret
          lines={['Insert']}
          icon={
            <GridIcon>
              <path d="M9 7.500h20v7H9z" fill="#83beec" stroke="#0067b8" /><path d="M18.500 7.500v7" stroke="#0067b8" />
              <path d="M12 9.500H3.500l4-4.500H5.500L-1 11l6.500 6h2l-4-4.500H12" fill="#f3f2f1" stroke="#2b88d8" />
            </GridIcon>
          }
        />
        <BigButton
          width="w-[42px]"
          caret
          lines={['Delete']}
          icon={
            <GridIcon>
              <path d="M4.500 7.500h11l5 3.500-5 3.500h-11z" fill="#83beec" stroke="#0067b8" />
              <path d="M20 5h10v13H17z" fill="#f3f2f1" /><path d="M18 6l10.500 11M28.500 6L18 17" stroke="#e8333c" strokeWidth="1.400" />
            </GridIcon>
          }
        />
        <BigButton
          width="w-[44px]"
          caret
          lines={['Format']}
          icon={
            <GridIcon>
              <path d="M7.500 7.500h13v7h-13z" fill="#83beec" stroke="#0067b8" />
              <path d="M6.500-2.500h15M6.500-4v3M21.500-4v3" stroke="#2b88d8" strokeWidth="1.300" />
            </GridIcon>
          }
        />
      </Group>

      <Group label="Editing" width="w-[193px]">
        <div className="flex w-[92px] flex-col pl-[10px]">
          <SmallButton
            height="h-[23px]"
            label="AutoSum"
            caret
            gap="gap-2"
            icon={<svg viewBox="0 0 12 14" width="12" height="14" fill="none" stroke="#3b3a39" strokeWidth="1.200"><path d="M11.500 3V.7H.8L7 7 .8 13.300h10.700V11" /></svg>}
          />
          <SmallButton
            height="h-[23px]"
            label="Fill"
            caret
            gap="gap-1"
            icon={
              <svg viewBox="0 0 16 14" width="16" height="14" fill="none">
                <path d="M.5 .5h15v13H.5z" fill="#fff" stroke="#3b3a39" /><path d="M.5 2.500h15" stroke="#3b3a39" /><path d="M8 4v7.500M5 8.500l3 3 3-3" stroke="#2b88d8" strokeWidth="1.300" />
              </svg>
            }
          />
          <SmallButton
            height="h-[23px]"
            label="Clear"
            caret
            gap="gap-1"
            icon={
              <svg viewBox="0 0 16 14" width="16" height="14" fill="none" stroke="#9b37a5" strokeWidth="1.200">
                <path d="M1 9l9-8.500 5 4L6 13.500H4z" fill="#fff" /><path d="M1 9l4-3.500 5 4-4 4H4z" fill="#d59adb" />
              </svg>
            }
          />
        </div>
        <BigButton
          width="ml-2 w-[42px]"
          caret
          lines={['Sort &', 'Filter']}
          icon={
            <svg viewBox="0 0 29 28" width="29" height="28" fill="none" strokeWidth="1.400">
              <path d="M1 12L5.500 1 10 12M2.500 8h6" stroke="#2b88d8" /><path d="M1.500 15.700H9L1.500 26.300H9.500" stroke="#3b3a39" />
              <path d="M13 7h15v3l-6 6v7l-3-2v-5l-6-6z" fill="#fff" stroke="#3b3a39" />
            </svg>
          }
        />
        <BigButton
          width="w-[44px]"
          caret
          lines={['Find &', 'Select']}
          icon={
            <svg viewBox="0 0 30 30" width="30" height="30" fill="none" stroke="#3b3a39" strokeWidth="1.300">
              <circle cx="18.500" cy="11" r="10" fill="#fff" /><path d="M11.500 18L1 28.500" />
            </svg>
          }
        />
      </Group>

      <Group label="Ideas" width="w-[57px]">
        <BigButton
          width="w-full"
          lines={['Ideas']}
          icon={
            <svg viewBox="0 0 22 30" width="22" height="30" fill="#83beec" stroke="#0067b8" strokeWidth="1.300">
              <path d="M9.500 1h9l-6 10.500H21L4 28.500 9 16H1.500z" />
            </svg>
          }
        />
      </Group>

      <div className="flex w-8 items-end justify-end pr-2 pb-1">
        <button type="button" aria-label="Collapse ribbon">
          <svg viewBox="0 0 10 8" width="10" height="8" fill="none" stroke="#605e5c" strokeWidth="1.800"><path d="M1 6.500l4-4 4 4" /></svg>
        </button>
      </div>
    </div>
  );
}

function FormulaBar() {
  return (
    <div className="flex h-[47px] shrink-0 bg-gradient-to-b from-[#cfcfcf] to-[#e6e6e6] to-[8px] pt-[11px] pr-[5px] pl-[5px] text-[13px]">
      <label className="relative flex h-[26px] w-[102px] items-center border border-[#c6c6c6] bg-white">
        <input aria-label="Name box" defaultValue="A1" className="w-full bg-transparent pt-0.5 pl-1.5 outline-none" />
        <svg viewBox="0 0 8 5" width="8" height="5" className="absolute right-1.5 fill-[#777]"><path d="M0 0h8L4 5z" /></svg>
      </label>
      <svg viewBox="0 0 2 10" width="2" height="10" className="mt-2 ml-[14px] fill-[#a6a6a6]"><path d="M0 0h2v2H0zM0 4h2v2H0zM0 8h2v2H0z" /></svg>
      <div className="ml-[14px] flex h-[26px] w-[110px] items-center justify-around border border-[#c6c6c6] bg-white">
        <button type="button" aria-label="Cancel"><svg viewBox="0 0 12 12" width="12" height="12" stroke="#bdbdbd" strokeWidth="1.800"><path d="M1 1l10 10M11 1L1 11" /></svg></button>
        <button type="button" aria-label="Enter"><svg viewBox="0 0 14 12" width="14" height="12" fill="none" stroke="#bdbdbd" strokeWidth="2.400"><path d="M1 7l4 4 8-10" /></svg></button>
        <button type="button" aria-label="Insert function" className="font-['Liberation_Serif',serif] text-base leading-4 text-[#444] italic">
          f<span className="text-xs">x</span>
        </button>
      </div>
      <label className="ml-[3px] flex h-[26px] flex-1 items-center border border-[#c6c6c6] bg-white">
        <input aria-label="Formula bar" defaultValue="Timestamp" className="flex-1 bg-transparent pt-0.5 pl-[11px] outline-none" />
        <svg viewBox="0 0 8 6" width="8" height="6" className="mr-1" fill="none" stroke="#605e5c" strokeWidth="1.800"><path d="M.5 1L4 4.500 7.500 1" /></svg>
      </label>
    </div>
  );
}

function cellAlign(value: string) {
  if (value === 'TRUE' || value === 'FALSE') return 'text-center';
  return value.startsWith('2018-') ? 'pl-0.5 text-left' : 'pr-0.5 text-right';
}

function Sheet() {
  const td = 'h-5 overflow-hidden border-r border-b border-[#d4d4d4] pt-px leading-[18px] whitespace-nowrap';
  const rowHead = 'border-r border-b border-r-[#9b9b9b] pt-px text-center font-normal leading-[18px]';
  return (
    <div className="min-w-0 flex-1 overflow-hidden border-r border-[#9b9b9b] bg-white">
      <table className="w-[1946px] table-fixed border-separate border-spacing-0 font-[Roboto,sans-serif] text-[13px] text-black">
        <colgroup>
          <col className="w-[26px]" />
          {COLUMNS.map((c) => <col key={c} className="w-16" />)}
        </colgroup>
        <thead>
          <tr>
            <th className="h-5 border-r border-b border-[#9b9b9b] border-r-[#b8b8b8] bg-[#e6e6e6]">
              <svg viewBox="0 0 12 12" width="12" height="12" className="ml-auto mr-[3px] fill-[#b2b2b2]"><path d="M12 0v12H0z" /></svg>
            </th>
            {COLUMNS.map((c, i) => (
              <th key={c} scope="col" className={`h-5 border-r border-b border-[#9b9b9b] border-r-[#b8b8b8] font-normal leading-[19px] ${c === 'A' ? 'bg-[#d2d2d2] text-[#217346]' : 'bg-[#e6e6e6] text-[#222]'}`}>
                {i < COLUMNS.length - 1 && c}
              </th>
            ))}
          </tr>
        </thead>
        <tbody>
          <tr>
            <th scope="row" className={`${rowHead} border-b-[#c0c0c0] bg-[#d2d2d2] text-[#217346]`}>1</th>
            {HEADERS.map((h, i) => (
              <td key={i} className={i === 0 ? 'relative h-5 border-r border-b border-[#d4d4d4] pt-px pl-0.5 leading-[18px]' : `${td} pl-0.5`}>
                <span className="block overflow-hidden whitespace-nowrap">{h}</span>
                {i === 0 && (
                  <span className="absolute -inset-x-px -top-0.5 -bottom-px border-2 border-[#217346]">
                    <span className="absolute -right-1 -bottom-1 h-1.5 w-1.5 border-t border-l border-white bg-[#217346]" />
                  </span>
                )}
              </td>
            ))}
          </tr>
          {ROWS.map((row, r) => (
            <tr key={r}>
              <th scope="row" className={`${rowHead} border-b-[#c0c0c0] bg-[#e6e6e6] text-[#333]`}>{r + 2}</th>
              {row.map((value, c) => <td key={c} className={`${td} ${cellAlign(value)}`}>{value}</td>)}
            </tr>
          ))}
          <tr>
            <th className={`${rowHead} border-b-[#c0c0c0] bg-[#e6e6e6]`} />
            {COLUMNS.map((c) => <td key={c} className={td} />)}
          </tr>
        </tbody>
      </table>
    </div>
  );
}

function ScrollButton({ label, path }: { label: string; path: string }) {
  return (
    <button type="button" aria-label={label} className="flex h-[15px] w-[15px] shrink-0 items-center justify-center border border-[#ababab] bg-white">
      <svg viewBox="0 0 7 7" width="7" height="7" fill="#605e5c"><path d={path} /></svg>
    </button>
  );
}

function SheetTabs() {
  return (
    <div className="flex h-7 shrink-0 items-start border-b border-[#c6c6c6] bg-[#e6e6e6]">
      <div className="flex h-[27px] w-[100px] items-center border-t border-[#9b9b9b] pl-[26px]">
        <button type="button" aria-label="Previous sheet" className="w-[29px]"><svg viewBox="0 0 5 8" width="5" height="8" fill="#bdbdbd"><path d="M5 0v8L0 4z" /></svg></button>
        <button type="button" aria-label="Next sheet"><svg viewBox="0 0 5 8" width="5" height="8" fill="#bdbdbd"><path d="M0 0v8l5-4z" /></svg></button>
      </div>
      <button type="button" className="h-6 w-32 border-r border-b-2 border-l border-[#9b9b9b] border-b-[#217346] bg-white text-[13px] leading-5 font-semibold text-[#217346]">
        VAPOR_Practice1
      </button>
      <div className="flex h-[27px] flex-1 justify-between border-t border-[#9b9b9b] pt-[5px]">
        <button type="button" aria-label="New sheet" className="ml-8 flex items-start">
          <svg viewBox="0 0 17 17" width="17" height="17" fill="none" stroke="#777"><circle cx="8.500" cy="8.500" r="7.500" /><path d="M8.500 4.500v8M4.500 8.500h8" strokeWidth="2" /></svg>
        </button>
        <div className="flex w-[767px] items-start">
          <svg viewBox="0 0 2 10" width="2" height="10" className="mt-[3px] mr-[14px] fill-[#a6a6a6]"><path d="M0 0h2v2H0zM0 4h2v2H0zM0 8h2v2H0z" /></svg>
          <ScrollButton label="Scroll left" path="M5 0v7L1 3.500z" />
          <span className="flex h-[15px] flex-1 bg-[#dadada]"><span className="w-[78%] border border-[#ababab] bg-white" /></span>
          <ScrollButton label="Scroll right" path="M2 0v7l4-3.500z" />
          <span className="w-[21px]" />
        </div>
      </div>
    </div>
  );
}

function StatusBar() {
  return (
    <footer className="flex h-[21px] shrink-0 items-center justify-end bg-[#f3f2f1] pr-[7px]">
      <button type="button" aria-label="Normal view" className="flex h-full w-[38px] items-center justify-center bg-[#c6c6c6]">
        <svg viewBox="0 0 13 13" width="13" height="13" fill="none" stroke="#605e5c" shapeRendering="crispEdges"><path d="M.5 .5h12v12H.5zM4.500 0v13M8.500 0v13M0 4.500h13M0 8.500h13" /></svg>
      </button>
      <button type="button" aria-label="Page layout view" className="flex h-full w-[38px] items-center justify-center">
        <svg viewBox="0 0 14 13" width="14" height="13" fill="none" stroke="#605e5c" shapeRendering="crispEdges"><path d="M.5 .5h13v12H.5zM3.500 2.500h7v8h-7zM5 4.500h4M5 6.500h4M5 8.500h4" /></svg>
      </button>
      <button type="button" aria-label="Page break preview" className="flex h-full w-[38px] items-center justify-center">
        <svg viewBox="0 0 14 13" width="14" height="13" fill="none" stroke="#605e5c" shapeRendering="crispEdges"><path d="M.5 .5h13v12H.5zM4.500 0v7M9.500 0v7M0 7.500h10" /></svg>
      </button>
      <button type="button" aria-label="Zoom out" className="ml-[5px]"><svg viewBox="0 0 7 7" width="7" height="7" stroke="#605e5c" strokeWidth="2"><path d="M0 3.500h7" /></svg></button>
      <input
        type="range"
        aria-label="Zoom"
        defaultValue="50"
        className="mx-1 h-[11px] w-[100px] appearance-none bg-[linear-gradient(#a6a6a6,#a6a6a6)] bg-[length:100%_1px] bg-center bg-no-repeat [&::-webkit-slider-thumb]:h-[11px] [&::-webkit-slider-thumb]:w-[5px] [&::-webkit-slider-thumb]:appearance-none [&::-webkit-slider-thumb]:bg-[#777]"
      />
      <button type="button" aria-label="Zoom in"><svg viewBox="0 0 7 7" width="7" height="7" stroke="#605e5c" strokeWidth="2"><path d="M0 3.500h7M3.500 0v7" /></svg></button>
      <button type="button" className="ml-[11px] w-7 text-right text-[11px] text-[#605e5c]">100%</button>
    </footer>
  );
}

export default function App() {
  return (
    <div className="flex h-screen overflow-hidden bg-white pt-2 pb-[9px] font-['Open_Sans',sans-serif] text-[#444]">
      <div className="flex w-2 shrink-0 flex-col">
        <span className="h-[33px] bg-[#9aa0b1]" />
        <span className="h-[70px] bg-[#10203f]" />
        <span className="flex-1 bg-[#f0f0f0]" />
        <span className="h-[49px] bg-black" />
        <span className="h-10 bg-[#16191c]" />
      </div>
      <main className="flex min-w-0 flex-1 flex-col bg-[#e6e6e6]">
        <TitleBar />
        <TabRow />
        <Ribbon />
        <FormulaBar />
        <div className="flex min-h-0 flex-1">
          <Sheet />
          <div className="flex w-[21px] shrink-0 flex-col items-center pt-0.5">
            <ScrollButton label="Scroll up" path="M0 5h7L3.500 1z" />
            <span className="flex w-[15px] flex-1 flex-col bg-[#dadada]"><span className="h-[17px] border border-[#ababab] bg-white" /></span>
            <ScrollButton label="Scroll down" path="M0 2h7L3.500 6z" />
          </div>
        </div>
        <SheetTabs />
        <StatusBar />
      </main>
      <div className="-mt-2 -mb-[9px] flex w-2 shrink-0 border-l-4 border-[#4b5052]">
        <div className="flex flex-1 flex-col">
          <span className="h-[153px] bg-[#1a1a1a]" />
          <span className="flex-1 bg-[#1d4b59]" />
          <span className="h-[120px] bg-[#2b2d30]" />
        </div>
      </div>
    </div>
  );
}
